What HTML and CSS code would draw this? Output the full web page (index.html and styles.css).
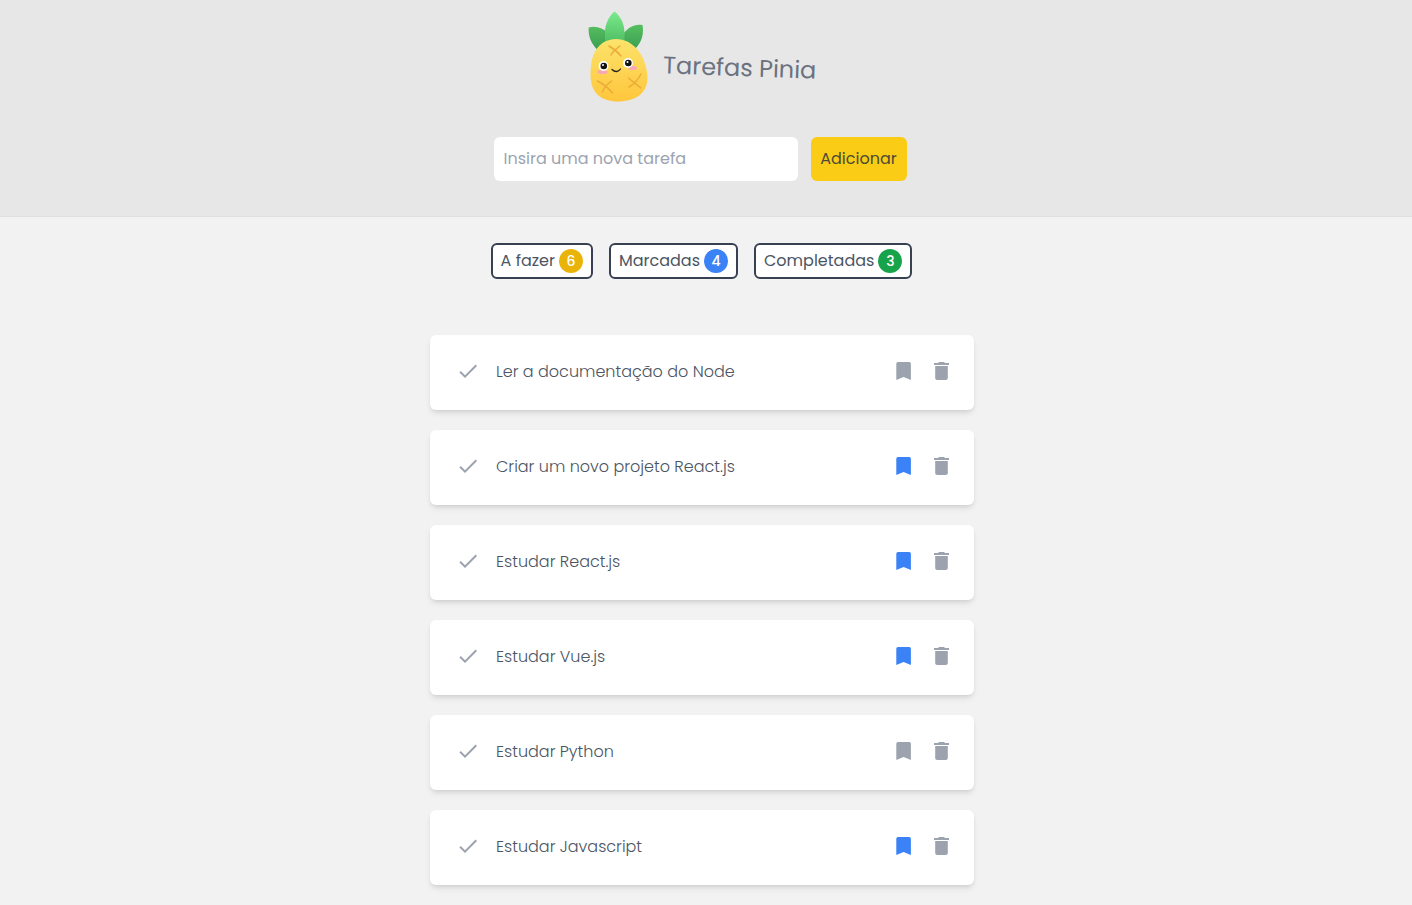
FILE: index.html
```html
<!DOCTYPE html>
<html lang="pt-BR">
<head>
<meta charset="utf-8">
<meta name="viewport" content="width=device-width, initial-scale=1">
<title>Tarefas Pinia</title>
<link rel="stylesheet" href="styles.css">
</head>
<body>
<svg class="sprite" aria-hidden="true">
  <symbol id="check" viewBox="0 0 24 24"><path d="M9 16.17L4.83 12l-1.42 1.41L9 19 21 7l-1.41-1.41z"/></symbol>
  <symbol id="mark" viewBox="0 0 24 24"><path d="M6 3h11.200a1.700 1.700 0 0 1 1.700 1.700V21l-7.300-3-7.300 3V4.700A1.700 1.700 0 0 1 6 3z"/></symbol>
  <symbol id="trash" viewBox="0 0 24 24"><path d="M5.200 19c0 1.100.9 2 2 2h8.600c1.100 0 2-.9 2-2V7H5.200v12zM19 4h-4l-1-1H9L8 4H4v2h15V4z"/></symbol>
</svg>
<header class="header">
  <div class="brand">
    <svg class="logo" viewBox="0 0 60 90" aria-hidden="true">
      <defs>
        <linearGradient id="body" x1="0" y1="0" x2="0" y2="1"><stop offset="0" stop-color="#fbe36b"/><stop offset="1" stop-color="#ffc63c"/></linearGradient>
        <linearGradient id="side" x1="0" y1="0" x2="0" y2="1"><stop offset="0" stop-color="#55bf60"/><stop offset="1" stop-color="#3c9e52"/></linearGradient>
        <linearGradient id="leaf" x1="0" y1="0" x2="0" y2="1"><stop offset="0" stop-color="#7bea8c"/><stop offset="1" stop-color="#46b45a"/></linearGradient>
      </defs>
      <path fill="url(#side)" d="M.7 15.500c7-2 14 .5 20 6v16H9C3 31 0 24 .7 15.500zM54.500 13c-8-1.500-14 2-19.500 9v15h12c7-7 9-15 7.500-24z"/>
      <path fill="url(#leaf)" d="M26.500-.5c-6 5-9.500 13-9.500 21v17h19.500V21C36.500 12 32.500 4 26.500-.5z"/>
      <path fill="url(#body)" d="M28 27C15 27 6 36 3.500 50c-2 13-1.500 25 5.500 32 5 5.500 13 7.500 21 7.500s17-2 23-7.500c6.500-6 8-15 5-27C54 38 42 27 28 27z"/>
      <path fill="none" stroke="#edab38" stroke-width="1.500" stroke-linecap="round" d="M21 34c5 3 8 5 12 10M32 34c-4 3-7 5-9 9M9.500 69c6 3 10 6 15 12M23.500 69c-4 3-8 6-9 11M40.500 66c5 4 8 7 12.500 10M53 62c-3 6-7 10-12 13"/>
      <ellipse cx="14.500" cy="60" rx="5" ry="2" fill="#f6a8b4"/><ellipse cx="44.500" cy="56" rx="4.500" ry="2" fill="#f6a8b4"/>
      <circle cx="15.500" cy="54" r="4.900" fill="#fff"/><circle cx="40" cy="51" r="4.900" fill="#fff"/>
      <circle cx="15.800" cy="54" r="3.300" fill="#111"/><circle cx="40.300" cy="51" r="3.300" fill="#111"/>
      <circle cx="15" cy="53" r="1" fill="#fff"/><circle cx="39.500" cy="50" r="1" fill="#fff"/>
      <path fill="none" stroke="#222" stroke-width="1.300" stroke-linecap="round" d="M24 57.500c3 3 6.500 2.500 8.500-.5"/>
    </svg>
    <h1 class="title">Tarefas Pinia</h1>
  </div>
  <form class="form">
    <input class="field" type="text" placeholder="Insira uma nova tarefa" aria-label="Insira uma nova tarefa">
    <button class="add" type="submit">Adicionar</button>
  </form>
</header>
<nav class="filters" aria-label="Filtros">
  <button class="filter" type="button">A fazer <span class="count count-todo">6</span></button>
  <button class="filter" type="button">Marcadas <span class="count count-marked">4</span></button>
  <button class="filter" type="button">Completadas <span class="count count-done">3</span></button>
</nav>
<main>
  <ul class="tasks">
    <li class="task"><button class="icon" type="button" aria-label="Concluir"><svg><use href="#check"/></svg></button><span class="text">Ler a documentação do Node</span><button class="icon" type="button" aria-label="Marcar"><svg><use href="#mark"/></svg></button><button class="icon" type="button" aria-label="Excluir"><svg><use href="#trash"/></svg></button></li>
    <li class="task"><button class="icon" type="button" aria-label="Concluir"><svg><use href="#check"/></svg></button><span class="text">Criar um novo projeto React.js</span><button class="icon marked" type="button" aria-label="Desmarcar"><svg><use href="#mark"/></svg></button><button class="icon" type="button" aria-label="Excluir"><svg><use href="#trash"/></svg></button></li>
    <li class="task"><button class="icon" type="button" aria-label="Concluir"><svg><use href="#check"/></svg></button><span class="text">Estudar React.js</span><button class="icon marked" type="button" aria-label="Desmarcar"><svg><use href="#mark"/></svg></button><button class="icon" type="button" aria-label="Excluir"><svg><use href="#trash"/></svg></button></li>
    <li class="task"><button class="icon" type="button" aria-label="Concluir"><svg><use href="#check"/></svg></button><span class="text">Estudar Vue.js</span><button class="icon marked" type="button" aria-label="Desmarcar"><svg><use href="#mark"/></svg></button><button class="icon" type="button" aria-label="Excluir"><svg><use href="#trash"/></svg></button></li>
    <li class="task"><button class="icon" type="button" aria-label="Concluir"><svg><use href="#check"/></svg></button><span class="text">Estudar Python</span><button class="icon" type="button" aria-label="Marcar"><svg><use href="#mark"/></svg></button><button class="icon" type="button" aria-label="Excluir"><svg><use href="#trash"/></svg></button></li>
    <li class="task"><button class="icon" type="button" aria-label="Concluir"><svg><use href="#check"/></svg></button><span class="text">Estudar Javascript</span><button class="icon marked" type="button" aria-label="Desmarcar"><svg><use href="#mark"/></svg></button><button class="icon" type="button" aria-label="Excluir"><svg><use href="#trash"/></svg></button></li>
  </ul>
</main>
</body>
</html>
```
FILE: styles.css
```css
* { box-sizing: border-box; }
body {
  margin: 0;
  background: #f2f2f2;
  color: #4b5563;
  font-family: Poppins, Inter, sans-serif;
  font-size: 16px;
  line-height: 24px;
}
button, input { font: inherit; color: inherit; border: 0; }
button { cursor: pointer; }
.sprite { display: none; }
.header {
  display: flex;
  flex-direction: column;
  align-items: center;
  gap: 35px;
  padding: 12px 12px 35px 0;
  background: #e7e7e7;
  border-bottom: 1px solid #dfdfdf;
}
.brand { display: flex; align-items: center; gap: 15px; padding-left: 5px; }
.logo { width: 60px; height: 90px; overflow: visible; }
.title {
  margin: 22px 0 0;
  font-size: 24px;
  font-weight: 400;
  line-height: 32px;
  color: #6b7280;
  transform: rotate(2deg);
}
.form { display: flex; gap: 13px; }
.field {
  width: 304px;
  height: 44px;
  padding: 0 10px 1px;
  border-radius: 6px;
  background: #fff;
}
.field::placeholder { color: #9ca3af; opacity: 1; }
.add {
  width: 96px;
  padding: 0;
  border-radius: 6px;
  background: #facc15;
  color: #4b4a37;
}
.filters {
  display: flex;
  justify-content: center;
  gap: 16px;
  padding: 26px 9px 56px 0;
}
.filter {
  display: flex;
  align-items: center;
  justify-content: center;
  gap: 4px;
  height: 36px;
  padding: 0 8px;
  border: 2px solid #374151;
  border-radius: 6px;
  background: #fff;
}
.count {
  width: 24px;
  border-radius: 50%;
  color: #fff;
  font-size: 14px;
  font-weight: 500;
  text-align: center;
}
.count-todo { background: #eab308; }
.count-marked { background: #3b82f6; }
.count-done { background: #16a34a; }
.tasks {
  display: grid;
  gap: 20px;
  max-width: 552px;
  margin: 0 auto;
  padding: 0 8px 20px 0;
  list-style: none;
}
.task {
  display: flex;
  align-items: center;
  gap: 14px;
  padding: 23px 20px 26px 26px;
  border-radius: 6px;
  background: #fff;
  box-shadow: 0 4px 6px -1px rgb(0 0 0 / 10%), 0 2px 4px -2px rgb(0 0 0 / 10%);
}
.text { flex: 1; padding: 2px 0 0 2px; font-weight: 300; }
.icon { width: 24px; height: 24px; padding: 0; background: none; color: #9ca3af; }
.icon svg { display: block; width: 24px; height: 24px; fill: currentColor; }
.marked { color: #3b82f6; }
```
